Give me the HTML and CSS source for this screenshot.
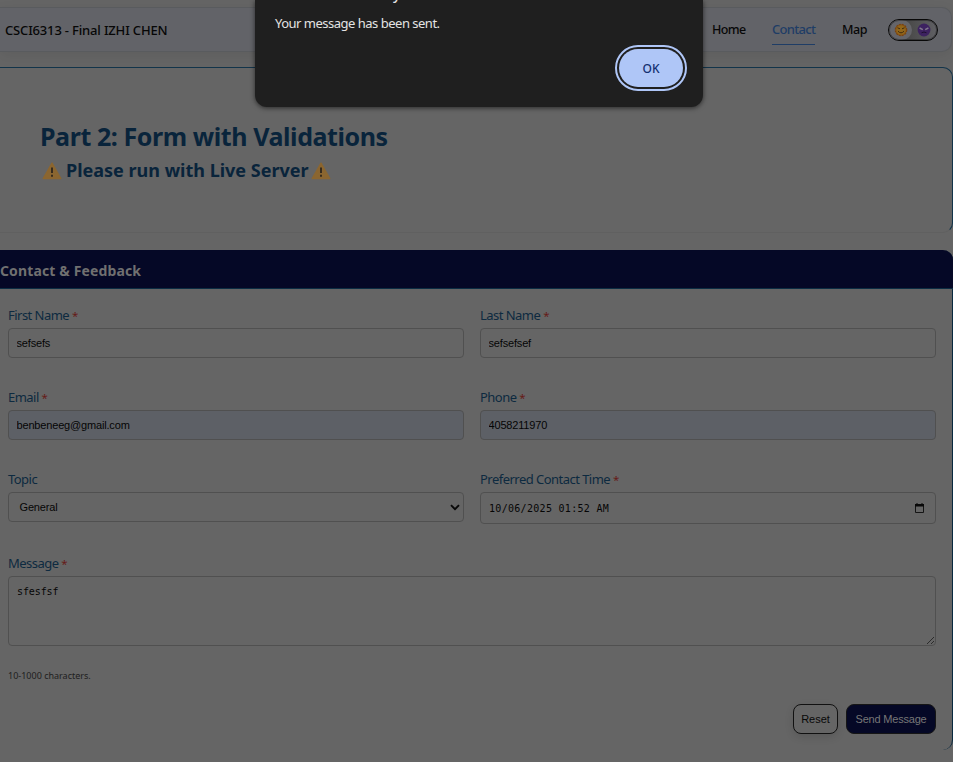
FILE: index.html
```html
<!DOCTYPE html>
<html lang="en">
<head>
<meta charset="utf-8">
<title>Contact</title>
<link rel="stylesheet" href="styles.css">
</head>
<body>
<header class="topbar">
  <div class="brand">CSCI6313 - Final IZHI CHEN</div>
  <nav class="nav">
    <a class="nav-link home">Home</a>
    <a class="nav-link contact active">Contact</a>
    <a class="nav-link map">Map</a>
    <div class="toggle">
      <span class="knob"><svg width="14" height="14" viewBox="0 0 14 14"><circle cx="7" cy="7" r="5.7" fill="#8a5713" stroke="#7b4310" stroke-width="1.2" stroke-dasharray="2 1"/><circle cx="7" cy="7" r="4.6" fill="#91661a"/><path d="M3.5 4.8l2.5 1M10.5 4.8L8 5.8M4 8.2q3 3.3 6 0" stroke="#3f2910" fill="none"/></svg></span>
      <svg class="moon" width="14" height="14" viewBox="0 0 14 14"><circle cx="7" cy="7" r="6.4" fill="#3d2260"/><path d="M2.6 5l3.2 1.6M11.4 5L8.2 6.6" stroke="#81788d" stroke-width="1.5"/><path d="M4.5 9.8q2.5-1.6 5 0" stroke="#1e1030" fill="none"/></svg>
    </div>
  </nav>
</header>
<section class="hero">
  <h1>Part 2: Form with Validations</h1>
  <h2>
    <svg class="warn" width="20" height="18" viewBox="0 0 20 18"><path d="M10 1.2L18.8 16.5H1.2z" fill="#8b6630" stroke="#8b6630" stroke-width="1.4" stroke-linejoin="round"/><path d="M10 5.5V11M10 12.7v2" stroke="#28221c" stroke-width="1.7"/></svg>
    <span>Please run with Live Server</span>
    <svg class="warn" width="20" height="18" viewBox="0 0 20 18"><path d="M10 1.2L18.8 16.5H1.2z" fill="#8b6630" stroke="#8b6630" stroke-width="1.4" stroke-linejoin="round"/><path d="M10 5.5V11M10 12.7v2" stroke="#28221c" stroke-width="1.7"/></svg>
  </h2>
</section>
<section class="card">
  <div class="card-head"><span>Contact &amp; Feedback</span></div>
  <form class="form">
    <div class="field"><label>First Name <i>*</i></label><input class="control" type="text" value="sefsefs"></div>
    <div class="field"><label>Last Name <i>*</i></label><input class="control" type="text" value="sefsefsef"></div>
    <div class="field"><label>Email <i>*</i></label><input class="control filled" type="text" value="benbeneeg@gmail.com"></div>
    <div class="field"><label>Phone <i>*</i></label><input class="control filled" type="text" value="4058211970"></div>
    <div class="field"><label>Topic</label>
      <div class="control select"><span>General</span><svg width="10" height="7" viewBox="0 0 10 7"><path d="M1 1.2l4 4 4-4" fill="none" stroke="#080808" stroke-width="1.9"/></svg></div></div>
    <div class="field"><label>Preferred Contact Time <i>*</i></label>
      <div class="control date"><span>10/06/2025 01:52 AM</span><svg width="9" height="10" viewBox="0 0 9 10"><path d="M.5 1.5h8v8h-8z" fill="none" stroke="#151515"/><path d="M0 1h9v2.5H0zM1.5 0h1v1h-1zM6.5 0h1v1h-1z" fill="#080808"/></svg></div></div>
    <div class="field wide"><label>Message <i>*</i></label>
      <div class="area"><textarea class="control">sfesfsf</textarea><svg class="grip" width="9" height="9" viewBox="0 0 9 9"><path d="M1 8l7-7M5 8l3-3" stroke="#252525" stroke-width=".9"/></svg></div>
      <p class="hint">10-1000 characters.</p></div>
    <div class="actions"><button type="button" class="btn reset">Reset</button><button type="button" class="btn send">Send Message</button></div>
  </form>
</section>
<div class="dialog">
  <div class="dialog-title">y</div>
  <p>Your message has been sent.</p>
  <button type="button" class="ok">OK</button>
</div>
</body>
</html>
```
FILE: styles.css
```css
* { box-sizing: border-box; }
html { background: #656565; }
body {
  margin: 0;
  height: 762px;
  overflow: hidden;
  display: flow-root;
  background: #656565;
  font-family: "Noto Sans", "Open Sans", sans-serif;
  color: #070707;
}
.topbar {
  margin: 7px 1px 0 0;
  height: 45px;
  display: flex;
  justify-content: space-between;
  align-items: center;
  padding: 0 13px 0 5px;
  background: #626368;
  border: 1px solid #595b5e;
  border-left: 0;
  border-radius: 0 10px 10px 0;
  box-shadow: 0 4px 14px rgba(0, 0, 0, .07);
  font-size: 13px;
  font-weight: 500;
}
.brand { letter-spacing: -.17px; white-space: nowrap; }
.nav { display: flex; align-items: center; }
.nav-link { height: 30px; line-height: 29px; border-bottom: 1px solid transparent; margin-right: 27px; white-space: nowrap; }
.home { width: 33px; font-size: 12.5px; letter-spacing: -.6px; }
.contact { width: 43px; letter-spacing: -.7px; }
.map { width: 25px; margin-right: 21px; font-size: 12.5px; letter-spacing: -.5px; }
.active { color: #1f3d66; border-color: #1f3d66; }
.toggle {
  width: 50px;
  height: 22px;
  border: 1px solid #080808;
  outline: 1px solid rgba(8, 8, 8, .35);
  outline-offset: -2px;
  border-radius: 11px;
  background: linear-gradient(90deg, #4b4b4b 45%, #606064);
  display: flex;
  align-items: center;
  justify-content: space-between;
  padding: 0 6px 0 0;
}
.knob { width: 23px; height: 20px; border-radius: 10px; background: #65656a; display: flex; align-items: center; justify-content: center; }
.hero {
  margin-top: 15px;
  height: 166px;
  padding: 50px 40px 0;
  border-top: 1px solid #12344a;
  border-right: 1px solid #12344a;
  border-bottom: 1px solid #606060;
  border-radius: 0 10px 10px 0;
  color: #09243b;
}
h1 { margin: 0; font-size: 25px; line-height: 36px; font-weight: 700; letter-spacing: -.42px; white-space: nowrap; }
h2 { margin: 0 0 0 2px; height: 32px; display: flex; align-items: center; font-size: 18px; font-weight: 700; white-space: nowrap; }
h2 span { width: 243px; margin: 0 2px 0 4px; }
h2 span, h2 svg { flex: none; }
.warn { position: relative; top: 1px; }
.card { margin-top: 17px; height: 500px; border-right: 1px solid #08293f; border-radius: 0 10px 10px 0; }
.card-head {
  height: 39px;
  margin-right: -1px;
  padding-top: 2px;
  display: flex;
  align-items: center;
  background: #050826;
  border-bottom: 1px solid #0c2d43;
  border-radius: 0 10px 0 0;
  color: #707070;
  font-size: 14px;
  font-weight: 700;
}
.card-head span { letter-spacing: .13px; }
.form { display: grid; grid-template-columns: 456px 456px; column-gap: 16px; row-gap: 29px; padding: 16px 0 0 8px; }
.field { display: flex; flex-direction: column; }
.wide { grid-column: 1 / 3; }
label { height: 22px; margin-bottom: 1px; font-size: 13px; line-height: 21px; letter-spacing: -.53px; color: #0d2a40; white-space: nowrap; }
label i { color: #651b18; font-size: 11.5px; font-style: normal; }
.control {
  width: 100%;
  height: 30px;
  margin: 0;
  padding: 0 7.5px;
  border: 1px solid #505050;
  border-radius: 4px;
  background: transparent;
  color: #050505;
  font: 11px "Liberation Sans", Arial, sans-serif;
  letter-spacing: -.17px;
  outline: 0;
}
.filled { background: #5d6066; }
.select, .date { display: flex; align-items: center; justify-content: space-between; }
.select { padding: 0 3px 0 10.5px; }
.date { height: 32px; padding: 0 11px 0 8px; font: 10px "DejaVu Sans Mono", monospace; letter-spacing: .3px; }
.area { position: relative; height: 70px; }
textarea.control { display: block; height: 70px; padding: 9px 8px; resize: none; font: 10px "DejaVu Sans Mono", monospace; letter-spacing: -.1px; }
.grip { position: absolute; right: 1px; bottom: 1px; }
.hint { margin: 22px 0 0; height: 15px; line-height: 15px; font-size: 9px; color: #202020; }
.actions { grid-column: 1 / 3; display: flex; justify-content: flex-end; gap: 8px; margin-top: -8px; }
.btn { height: 30px; padding: 0; border: 1px solid #111; border-radius: 8px; font: 11px "Liberation Sans", Arial, sans-serif; }
.reset { width: 45px; background: #656565; color: #080808; box-shadow: 0 3px 8px rgba(0, 0, 0, .12); }
.send { width: 90px; background: #050826; color: #777; border-color: #161616; letter-spacing: -.2px; }
.dialog {
  position: absolute;
  top: 0;
  left: 255px;
  width: 448px;
  height: 107px;
  overflow: hidden;
  background: #1f1f1f;
  border-radius: 0 0 12px 12px;
  box-shadow: 0 1px 5px rgba(0, 0, 0, .6);
  color: #e3e3e3;
  font-size: 13px;
}
.dialog-title { position: absolute; left: 138px; top: -15px; line-height: 20px; font-size: 14px; font-weight: 500; }
.dialog p { margin: 13px 0 0 20px; line-height: 20px; letter-spacing: -.5px; white-space: nowrap; }
.ok {
  display: block;
  margin: 16px 0 0 364px;
  width: 64px;
  height: 38px;
  padding: 0;
  border: 0;
  border-radius: 19px;
  background: #afc6f7;
  color: #142f70;
  outline: 2px solid #afc6f7;
  outline-offset: 2px;
  font: 500 12px "Noto Sans", sans-serif;
}
```
